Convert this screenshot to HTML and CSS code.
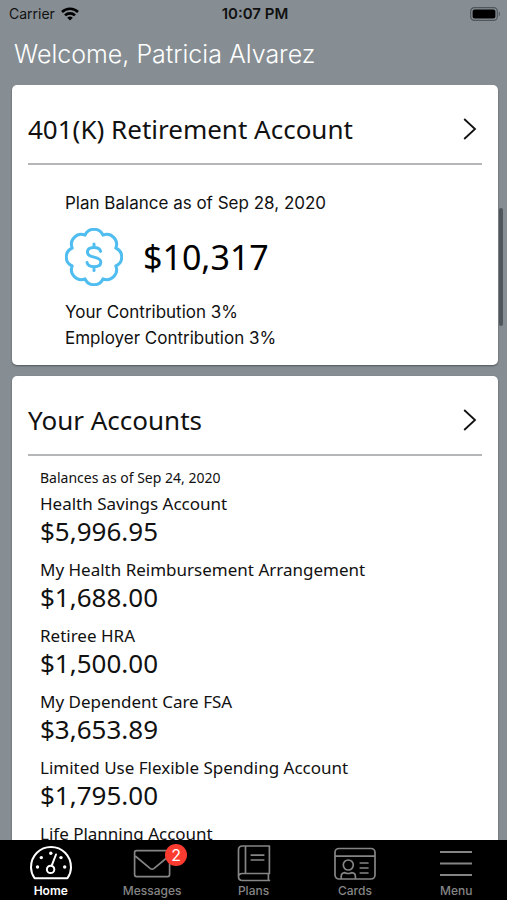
FILE: index.html
```
<!DOCTYPE html>
<html lang="en">
<head>
    <meta charset="UTF-8">
    <meta name="viewport" content="width=device-width, initial-scale=1.0">
    <title>Home</title>
    <link rel="stylesheet" href="styles.css">
</head>
<body>

    <div class="status-bar">
        <div class="carrier">
            <span>Carrier</span>
            <svg width="18" height="14" viewBox="0 0 18 14" fill="none" stroke="#000" stroke-width="2.6">
                <path d="M1 5a11.4 11.4 0 0 1 16 0"/>
                <path d="M4 8.4a7.1 7.1 0 0 1 10 0"/>
                <path d="M9 13.6L6.2 10.8a4 4 0 0 1 5.6 0z" fill="#000" stroke="none"/>
            </svg>
        </div>
        <div class="clock">10:07 PM</div>
        <svg class="battery" width="31" height="14" viewBox="0 0 31 14">
            <rect x="0.7" y="0.7" width="26.6" height="12.6" rx="3.6" fill="none" stroke="#50565a" stroke-width="1.2"/>
            <rect x="2.6" y="2.4" width="22.8" height="9.2" rx="2" fill="#000"/>
            <path d="M28.8 4.6c1.6.8 1.6 4 0 4.8z" fill="#50565a"/>
        </svg>
    </div>

    <h1 class="welcome">Welcome, Patricia Alvarez</h1>

    <main class="content">
        <section class="card">
            <a class="card-header" href="#retirement">
                <h2>401(K) Retirement Account</h2>
                <svg width="14" height="22" viewBox="0 0 14 22" fill="none" stroke="#111" stroke-width="1.8">
                    <path d="M1.2 1L12 11L1.2 21"/>
                </svg>
            </a>
            <div class="plan">
                <p>Plan Balance as of Sep 28, 2020</p>
                <div class="plan-balance">
                    <svg width="58" height="58" viewBox="0 0 58 58" fill="none" stroke="#4fbdf0" stroke-width="3" stroke-linejoin="round" stroke-linecap="round">
                        <path d="M20 7.200A9.800 9.800 0 0 1 38 7.200A9.800 9.800 0 0 1 50.800 20A9.800 9.800 0 0 1 50.800 38A9.800 9.800 0 0 1 38 50.800A9.800 9.800 0 0 1 20 50.800A9.800 9.800 0 0 1 7.200 38A9.800 9.800 0 0 1 7.200 20A9.800 9.800 0 0 1 20 7.200z"/>
                        <path d="M29 16v3.6M29 38.600v3.8M35.600 23.400c-.6-2.600-3-3.800-6.600-3.800c-4 0-6.600 1.800-6.600 4.700c0 3 2.600 4 6.600 4.800c4 .8 6.800 1.800 6.800 4.900c0 3-2.800 4.700-6.800 4.700c-3.800 0-6.400-1.400-7-4.200"/>
                    </svg>
                    <strong>$10,317</strong>
                </div>
                <p>Your Contribution 3%</p>
                <p>Employer Contribution 3%</p>
            </div>
        </section>

        <section class="card">
            <a class="card-header" href="#accounts">
                <h2>Your Accounts</h2>
                <svg width="14" height="22" viewBox="0 0 14 22" fill="none" stroke="#111" stroke-width="1.8">
                    <path d="M1.2 1L12 11L1.2 21"/>
                </svg>
            </a>
            <div class="accounts">
                <p class="as-of">Balances as of Sep 24, 2020</p>
                <dl class="account-list">
                    <dt>Health Savings Account</dt>
                    <dd>$5,996.95</dd>
                    <dt>My Health Reimbursement Arrangement</dt>
                    <dd>$1,688.00</dd>
                    <dt>Retiree HRA</dt>
                    <dd>$1,500.00</dd>
                    <dt>My Dependent Care FSA</dt>
                    <dd>$3,653.89</dd>
                    <dt>Limited Use Flexible Spending Account</dt>
                    <dd>$1,795.00</dd>
                    <dt>Life Planning Account</dt>
                </dl>
            </div>
        </section>
    </main>

    <div class="scroll-thumb"></div>

    <nav class="tab-bar">
        <a class="tab active" href="#home">
            <svg width="42" height="38" viewBox="0 0 42 38" fill="none" stroke="currentColor" stroke-width="2" stroke-linejoin="round">
                <path d="M4.600 34.200C2.400 31 1 27.400 1 23.400C1 11.500 10 3 21 3s20 8.500 20 20.400c0 4-1.400 7.600-3.600 10.800z"/>
                <circle cx="20.600" cy="25.400" r="3.700"/>
                <path d="M21.600 21.800L26 10.500" stroke-linecap="round"/>
                <g fill="currentColor" stroke="none">
                    <circle cx="7.500" cy="23" r="1.700"/>
                    <circle cx="11.300" cy="13.600" r="1.700"/>
                    <circle cx="20.800" cy="9.300" r="1.700"/>
                    <circle cx="31" cy="13.600" r="1.700"/>
                    <circle cx="34.700" cy="23" r="1.700"/>
                </g>
            </svg>
            <span>Home</span>
        </a>
        <a class="tab" href="#messages">
            <svg width="42" height="38" viewBox="0 0 42 38" fill="none" stroke="currentColor" stroke-width="1.7" stroke-linejoin="round">
                <rect x="3.600" y="6.600" width="35" height="26" rx="2"/>
                <path d="M4.200 12L19.400 24.600q1.700 1.200 3.400 0L38 12"/>
            </svg>
            <span class="badge">2</span>
            <span>Messages</span>
        </a>
        <a class="tab" href="#plans">
            <svg width="42" height="38" viewBox="0 0 42 38" fill="none" stroke="currentColor" stroke-width="1.7" stroke-linejoin="round">
                <path d="M36.400 29.500V2H9.500q-4 0-4 4v26.500q0 4 4 4h27.700M5.500 33q0-3.500 4-3.500h27.700M35.400 29.500v7M12.500 2v27.500"/>
                <path d="M17.600 11.200h13.800M17.600 16h13.800"/>
            </svg>
            <span>Plans</span>
        </a>
        <a class="tab" href="#cards">
            <svg width="42" height="38" viewBox="0 0 42 38" fill="none" stroke="currentColor" stroke-width="1.7" stroke-linejoin="round">
                <rect x="1" y="4.500" width="40" height="30.500" rx="4"/>
                <path d="M1 12.200h40M25.600 19h9M25.600 24h9M25.600 29h9"/>
                <circle cx="14.300" cy="21" r="5"/>
                <path d="M7.200 35v-2.600q0-3.400 3.800-3.700q3.300 1.600 6.600 0q3.800.3 3.800 3.700V35"/>
            </svg>
            <span>Cards</span>
        </a>
        <a class="tab" href="#menu">
            <svg width="42" height="38" viewBox="0 0 42 38" fill="none" stroke="currentColor" stroke-width="2">
                <path d="M5 8h32M5 19.500h32M5 31h32"/>
            </svg>
            <span>Menu</span>
        </a>
    </nav>

</body>
</html>
```
FILE: styles.css
```
* {
    box-sizing: border-box;
}

body {
    display: flex;
    flex-direction: column;
    height: 100vh;
    margin: 0;
    background-color: #868e94;
    color: #111;
    font-family: "Noto Sans", sans-serif;
    overflow: hidden;
}

h1, h2, p, dl, dd {
    margin: 0;
    font-weight: 400;
}

a {
    color: inherit;
    text-decoration: none;
}

svg {
    display: block;
    flex-shrink: 0;
}

.status-bar {
    display: grid;
    grid-template-columns: 1fr auto 1fr;
    align-items: center;
    height: 27px;
    padding: 0 6px 0 9px;
    font-family: Inter, sans-serif;
    font-size: 14px;
}

.carrier {
    display: flex;
    align-items: center;
    gap: 6px;
}

.clock {
    font-size: 15px;
    font-weight: 600;
}

.battery {
    justify-self: end;
}

.welcome {
    height: 58px;
    padding: 0 14px;
    color: #fff;
    font-family: Inter, sans-serif;
    font-size: 25px;
    font-weight: 300;
    line-height: 54px;
}

.content {
    display: flex;
    flex: 1;
    flex-direction: column;
    gap: 11px;
    min-height: 0;
    padding: 0 9px 0 12px;
    overflow-y: auto;
    scrollbar-width: none;
}

.card {
    flex-shrink: 0;
    padding: 0 16px;
    background-color: #fff;
    border-radius: 5px;
    box-shadow: 0 1px 2px rgba(0, 0, 0, 0.4);
}

.card-header {
    display: flex;
    align-items: center;
    justify-content: space-between;
    height: 80px;
    padding: 10px 5px 0 0;
    border-bottom: 2px solid #b4b6b8;
}

.card-header h2 {
    font-size: 26px;
}

.plan {
    padding: 25px 0 14px 37px;
    font-family: Inter, sans-serif;
    font-size: 17px;
    line-height: 26px;
}

.plan-balance {
    display: flex;
    align-items: center;
    gap: 20px;
    margin: 12px 0 13px;
}

.plan-balance strong {
    color: #000;
    font-family: "Noto Sans", sans-serif;
    font-size: 34px;
    font-weight: 400;
}

.accounts {
    padding: 9px 0 0 12px;
    line-height: 26px;
}

.as-of {
    font-size: 14px;
}

.account-list {
    font-size: 17px;
}

.account-list dd {
    margin-bottom: 12px;
    font-size: 26px;
    line-height: 28px;
}

/* floats over the right edge of the page */
.scroll-thumb {
    position: absolute;
    top: 208px;
    right: 4px;
    width: 4px;
    height: 118px;
    background-color: #50575c;
    border-radius: 2px;
}

.tab-bar {
    display: flex;
    height: 60px;
    padding: 4px 0 0;
    background-color: #000;
}

.tab {
    position: relative;
    display: flex;
    flex: 1;
    flex-direction: column;
    align-items: center;
    color: #858585;
    font-family: Inter, sans-serif;
    font-size: 12px;
    font-weight: 500;
    line-height: 18px;
}

.tab.active {
    color: #fff;
    font-weight: 600;
}

.badge {
    position: absolute;
    top: 0;
    left: 50%;
    width: 22px;
    height: 22px;
    margin-left: 13px;
    background-color: #fc3b30;
    border-radius: 50%;
    color: #fff;
    font-size: 16px;
    font-weight: 400;
    line-height: 22px;
    text-align: center;
}
```
